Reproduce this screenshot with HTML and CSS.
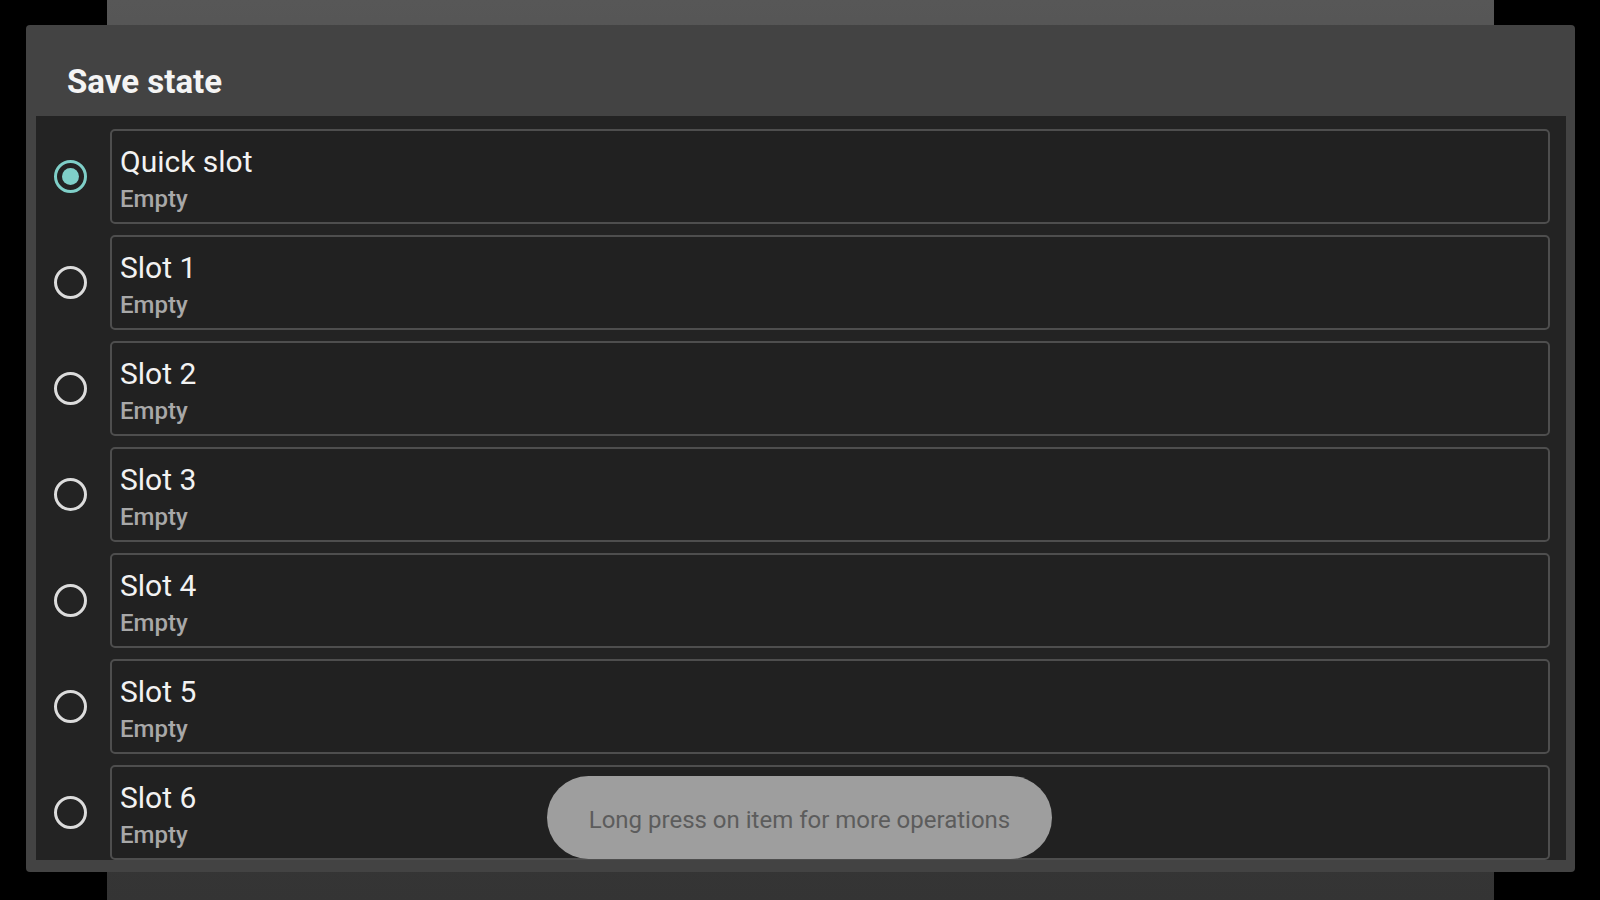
FILE: index.html
```html
<!DOCTYPE html>
<html lang="en">
<head>
<meta charset="utf-8">
<title>Save state</title>
<link rel="stylesheet" href="styles.css">
</head>
<body>
<div class="stage">
  <div class="backdrop"></div>
  <div class="dialog">
    <div class="dialog-header">
      <h1 class="dialog-title">Save state</h1>
    </div>
    <div class="slot-list">
      <div class="slot-row">
        <div class="radio-col"><span class="radio radio-checked"><span class="radio-dot"></span></span></div>
        <div class="slot-card">
          <div class="slot-name">Quick slot</div>
          <div class="slot-status">Empty</div>
        </div>
      </div>
      <div class="slot-row">
        <div class="radio-col"><span class="radio"></span></div>
        <div class="slot-card">
          <div class="slot-name">Slot 1</div>
          <div class="slot-status">Empty</div>
        </div>
      </div>
      <div class="slot-row">
        <div class="radio-col"><span class="radio"></span></div>
        <div class="slot-card">
          <div class="slot-name">Slot 2</div>
          <div class="slot-status">Empty</div>
        </div>
      </div>
      <div class="slot-row">
        <div class="radio-col"><span class="radio"></span></div>
        <div class="slot-card">
          <div class="slot-name">Slot 3</div>
          <div class="slot-status">Empty</div>
        </div>
      </div>
      <div class="slot-row">
        <div class="radio-col"><span class="radio"></span></div>
        <div class="slot-card">
          <div class="slot-name">Slot 4</div>
          <div class="slot-status">Empty</div>
        </div>
      </div>
      <div class="slot-row">
        <div class="radio-col"><span class="radio"></span></div>
        <div class="slot-card">
          <div class="slot-name">Slot 5</div>
          <div class="slot-status">Empty</div>
        </div>
      </div>
      <div class="slot-row">
        <div class="radio-col"><span class="radio"></span></div>
        <div class="slot-card">
          <div class="slot-name">Slot 6</div>
          <div class="slot-status">Empty</div>
        </div>
      </div>
    </div>
  </div>
  <div class="toast">Long press on item for more operations</div>
</div>
</body>
</html>
```

FILE: styles.css
```css
html, body {
  margin: 0;
  padding: 0;
  background: #000;
}

body {
  font-family: Roboto, "Noto Sans", "Liberation Sans", sans-serif;
  width: 1600px;
  height: 900px;
  overflow: hidden;
}

.stage {
  position: relative;
  width: 1600px;
  height: 900px;
  display: flex;
}

.backdrop {
  margin-left: 107px;
  width: 1387px;
  height: 900px;
  background: linear-gradient(180deg, #575757 0%, #4a4a4a 30%, #3c3c3c 70%, #343434 100%);
}

.dialog {
  position: absolute;
  left: 26px;
  top: 25px;
  width: 1549px;
  height: 847px;
  box-sizing: border-box;
  background: #434343;
  border-radius: 4px;
  padding: 0 9px 12px 10px;
  display: flex;
  flex-direction: column;
}

.dialog-header {
  height: 91px;
  flex: none;
  box-sizing: border-box;
  padding: 37px 0 0 31px;
}

.dialog-title {
  margin: 0;
  font-size: 33px;
  line-height: 39px;
  font-weight: 700;
  color: #f4f4f4;
}

.slot-list {
  flex: 1;
  background: #232323;
  overflow: hidden;
  padding-top: 13px;
  display: flex;
  flex-direction: column;
  gap: 11px;
}

.slot-row {
  display: flex;
  flex: none;
  height: 95px;
}

.radio-col {
  width: 74px;
  flex: none;
  display: flex;
  align-items: center;
  justify-content: flex-start;
  padding-left: 18px;
  box-sizing: border-box;
}

.radio {
  width: 33px;
  height: 33px;
  box-sizing: border-box;
  border: 3px solid #dcdcdc;
  border-radius: 50%;
  display: flex;
  align-items: center;
  justify-content: center;
}

.radio-checked {
  border-color: #7fcfc8;
}

.radio-dot {
  width: 17px;
  height: 17px;
  border-radius: 50%;
  background: #7fcfc8;
}

.slot-card {
  width: 1440px;
  flex: none;
  box-sizing: border-box;
  height: 95px;
  border: 2px solid #4e4e4e;
  border-radius: 5px;
  background: #212121;
  padding: 13px 0 0 8px;
}

.slot-name {
  font-size: 30px;
  line-height: 35px;
  color: #f2f2f2;
}

.slot-status {
  font-size: 24px;
  line-height: 28px;
  margin-top: 6px;
  color: #a8a8a8;
  font-weight: 500;
}

.toast {
  position: absolute;
  left: 547px;
  top: 776px;
  width: 505px;
  height: 83px;
  box-sizing: border-box;
  padding-top: 4px;
  border-radius: 42px;
  background: #9e9e9e;
  color: #5c5c5c;
  font-size: 24px;
  display: flex;
  align-items: center;
  justify-content: center;
}
```
